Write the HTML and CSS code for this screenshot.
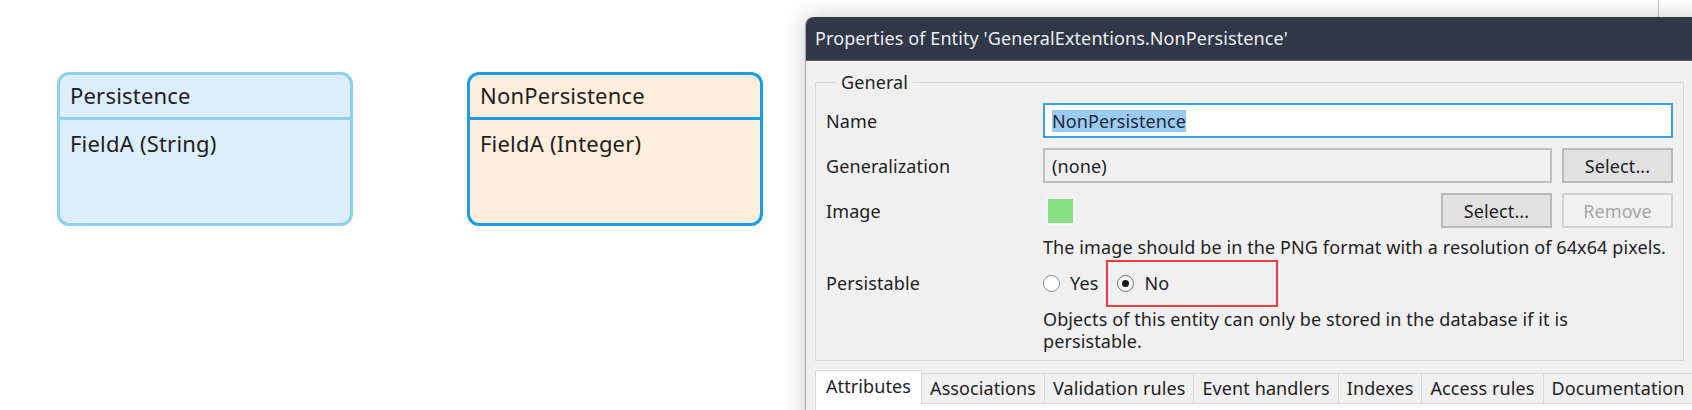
FILE: index.html
```html
<!DOCTYPE html>
<html>
<head>
<meta charset="utf-8">
<link rel="stylesheet" href="styles.css">
</head>
<body>
<div class="canvas">
  <div class="entity entity-persist">
    <div class="entity-head">Persistence</div>
    <div class="entity-body">FieldA (String)</div>
  </div>
  <div class="entity entity-nonpersist">
    <div class="entity-head">NonPersistence</div>
    <div class="entity-body">FieldA (Integer)</div>
  </div>
  <div class="backline"></div>

  <div class="dialog">
    <div class="titlebar">Properties of Entity 'GeneralExtentions.NonPersistence'</div>
    <div class="dialog-body">
      <fieldset class="group">
        <legend class="group-title">General</legend>
        <div class="form">
          <div class="label row-h">Name</div>
          <div class="field row-h">
            <div class="input input-active"><span class="sel">NonPersistence</span></div>
          </div>

          <div class="label row-h">Generalization</div>
          <div class="field row-h with-btn">
            <div class="input input-ro">(none)</div>
            <div class="btn">Select...</div>
          </div>

          <div class="label row-h">Image</div>
          <div class="field row-h image-row">
            <div class="swatch-wrap"><div class="swatch"></div></div>
            <div class="spacer"></div>
            <div class="btn">Select...</div>
            <div class="btn btn-disabled">Remove</div>
          </div>

          <div class="label help-h"></div>
          <div class="help">The image should be in the PNG format with a resolution of 64x64 pixels.</div>

          <div class="label persist-h">Persistable</div>
          <div class="field persist-h radios">
            <label class="radio"><span class="dot"></span>Yes</label>
            <label class="radio"><span class="dot dot-on"></span>No</label>
            <div class="highlight"></div>
          </div>

          <div class="label"></div>
          <div class="help help-2">Objects of this entity can only be stored in the database if it is persistable.</div>
        </div>
      </fieldset>

      <div class="tabs">
        <div class="tab tab-active">Attributes</div>
        <div class="tab">Associations</div>
        <div class="tab">Validation rules</div>
        <div class="tab">Event handlers</div>
        <div class="tab">Indexes</div>
        <div class="tab">Access rules</div>
        <div class="tab">Documentation</div>
      </div>
      <div class="tab-panel"></div>
    </div>
  </div>
</div>
</body>
</html>
```

FILE: styles.css
```css
html, body {
  margin: 0;
  padding: 0;
  background: #ffffff;
  overflow: hidden;
}
.canvas {
  position: relative;
  width: 1692px;
  height: 410px;
  font-family: "Noto Sans", "Open Sans", sans-serif;
  color: #1e1e1e;
}
.entity {
  position: absolute;
  top: 72px;
  width: 296px;
  height: 154px;
  box-sizing: border-box;
  border: 3px solid #8dd0f1;
  border-radius: 12px;
  background: #dbeefa;
  font-size: 22px;
  letter-spacing: 0.2px;
  display: flex;
  flex-direction: column;
}
.entity-persist { left: 57px; }
.entity-nonpersist {
  left: 467px;
  border-color: #1b9ce8;
  background: #fdeedd;
}
.entity-head {
  height: 45px;
  box-sizing: border-box;
  border-bottom: 3px solid #8dd0f1;
  padding: 0 10px;
  line-height: 41px;
}
.entity-nonpersist .entity-head { border-bottom-color: #1b9ce8; }
.entity-body {
  padding: 9px 10px 0;
  line-height: 28px;
}
.backline {
  position: absolute;
  left: 1658px;
  top: 0;
  width: 1px;
  height: 17px;
  background: #c4c4c4;
}
.dialog {
  position: absolute;
  left: 805px;
  top: 17px;
  width: 900px;
  height: 410px;
  background: #f0f0f0;
  border-left: 1px solid #a8a8a8;
  border-top-left-radius: 8px;
  box-shadow: 0 0 22px rgba(0, 0, 0, 0.22);
  font-size: 18px;
  letter-spacing: 0.1px;
}
.titlebar {
  height: 44px;
  background: #303747;
  color: #eceef2;
  border-top-left-radius: 8px;
  padding-left: 9px;
  line-height: 42px;
  font-size: 18px;
  border-bottom: 1px solid #5b606b;
  box-sizing: border-box;
}
.dialog-body {
  padding: 11px 0 0 9px;
}
.group {
  margin: 0;
  width: 868px;
  box-sizing: border-box;
  border: 1px solid #d8d8d8;
  padding: 11px 10px 8px 10px;
  height: 289px;
}
.group-title {
  margin-left: 10px;
  padding: 0 5px;
  line-height: 20px;
}
.form {
  display: grid;
  grid-template-columns: 217px 630px;
  column-gap: 0;
}
.label {
  display: flex;
  align-items: center;
}
.row-h { height: 35px; margin-bottom: 10px; }
.field { display: flex; align-items: stretch; }
.input {
  flex: 1;
  box-sizing: border-box;
  border: 2px solid #bfbfbf;
  padding: 0 7px;
  display: flex;
  align-items: center;
  background: #f0f0f0;
}
.input-active {
  border-color: #3aa0e8;
  background: #ffffff;
}
.sel {
  background: #9ccbef;
  line-height: 22px;
  color: #1c2a3a;
}
.with-btn { gap: 10px; }
.btn {
  width: 111px;
  box-sizing: border-box;
  border: 2px solid #b9b9b9;
  background: #e1e1e1;
  display: flex;
  align-items: center;
  justify-content: center;
}
.btn-disabled {
  background: #f1f1f1;
  border-color: #d2d2d2;
  color: #a6a6a6;
}
.image-row { gap: 10px; }
.swatch-wrap {
  width: 34px;
  display: flex;
  align-items: center;
  padding-left: 5px;
}
.swatch {
  width: 25px;
  height: 24px;
  background: #88e085;
  outline: 2px solid #f6f6f6;
}
.spacer { flex: 1; }
.help-h { height: 20px; }
.help {
  line-height: 22px;
  margin-top: -2px;
  white-space: nowrap;
}
.persist-h { height: 50px; }
.radios {
  position: relative;
  align-items: center;
  gap: 19px;
}
.radio {
  display: flex;
  align-items: center;
  gap: 10px;
}
.dot {
  width: 15px;
  height: 15px;
  border-radius: 50%;
  border: 1px solid #8a8a8a;
  background: #ffffff;
  display: flex;
  align-items: center;
  justify-content: center;
}
.dot-on {
  background: #f4f4f4;
  border-color: #707070;
}
.dot-on::after {
  content: "";
  width: 7px;
  height: 7px;
  border-radius: 50%;
  background: #1a1a1a;
}
.highlight {
  position: absolute;
  left: 63px;
  top: 2px;
  width: 172px;
  height: 47px;
  box-sizing: border-box;
  border: 2px solid #f03c3c;
}
.help-2 {
  white-space: normal;
  width: 560px;
  margin-top: 0;
}
.tabs {
  display: flex;
  align-items: flex-end;
  margin-top: 9px;
  height: 33px;
  border-bottom: 1px solid #dadada;
}
.tab {
  height: 30px;
  box-sizing: border-box;
  border: 1px solid #d9d9d9;
  border-bottom: none;
  margin-right: -1px;
  padding: 0 8px 2px;
  display: flex;
  align-items: center;
  background: #f0f0f0;
  white-space: nowrap;
}
.tab-active {
  height: 34px;
  margin-bottom: -1px;
  background: #ffffff;
  padding: 0 10px 3px;
}
.tab-panel {
  height: 20px;
  background: #ffffff;
  border-left: 1px solid #d9d9d9;
}
```
